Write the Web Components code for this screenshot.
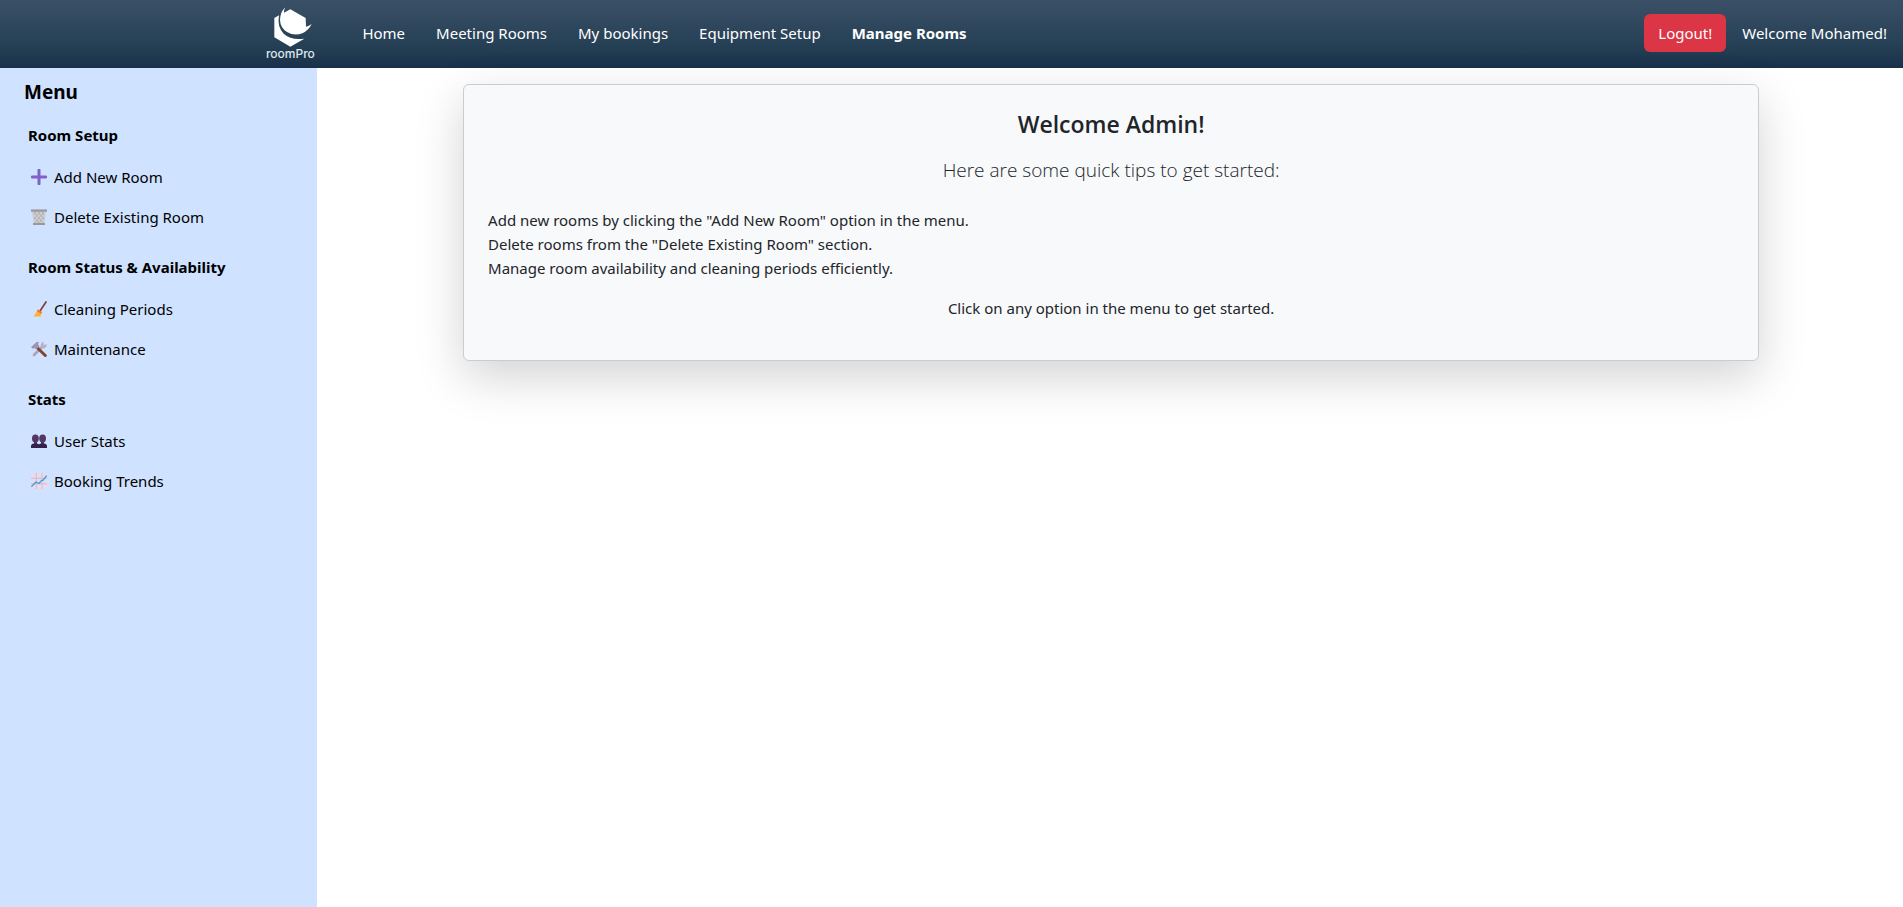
<!DOCTYPE html>
<html lang="en">
<head>
<meta charset="utf-8">
<title>roomPro</title>
<style>
  body { margin: 0; background: #fff; color: #212529; font: 400 15px/24px "Noto Sans", "Open Sans", sans-serif; }
</style>
</head>
<body>
<room-app></room-app>

<template id="t-app">
  <style>
    :host { display: flex; flex-direction: column; min-height: 100vh; }
    .body { display: flex; flex: 1; }
    side-menu { flex: 0 0 16.6667%; }
    main { flex: 1; padding: 16px 12px 16px 14px; }
  </style>
  <top-bar></top-bar>
  <div class="body">
    <side-menu>
      <menu-section heading="Room Setup">
        <menu-item icon="plus">Add New Room</menu-item>
        <menu-item icon="bin">Delete Existing Room</menu-item>
      </menu-section>
      <menu-section heading="Room Status &amp; Availability">
        <menu-item icon="broom">Cleaning Periods</menu-item>
        <menu-item icon="tools">Maintenance</menu-item>
      </menu-section>
      <menu-section heading="Stats">
        <menu-item icon="users">User Stats</menu-item>
        <menu-item icon="chart">Booking Trends</menu-item>
      </menu-section>
    </side-menu>
    <main><welcome-card></welcome-card></main>
  </div>
</template>

<template id="t-bar">
  <style>
    :host { display: block; background: linear-gradient(#3b5066, #243f54 70%, #18304a); color: #fff; }
    header { display: flex; align-items: center; height: 68px; padding: 0 16px 2px 14%; box-sizing: border-box; }
    nav { display: flex; gap: 31px; margin-left: 48px; flex: 1; white-space: nowrap; }
    a { color: inherit; text-decoration: none; }
    nav a[aria-current] { font-weight: 700; }
    button { height: 38px; padding: 0 14px; border: 0; border-radius: 6px; background: #dc3545; color: #fff; font: inherit; margin-right: 16px; }
    span { white-space: nowrap; }
  </style>
  <header>
    <room-logo></room-logo>
    <nav>
      <a href="#home">Home</a>
      <a href="#rooms">Meeting Rooms</a>
      <a href="#bookings">My bookings</a>
      <a href="#equipment">Equipment Setup</a>
      <a href="#manage" aria-current="page">Manage Rooms</a>
    </nav>
    <button type="button">Logout!</button>
    <span>Welcome Mohamed!</span>
  </header>
</template>

<template id="t-logo">
  <style>
    :host { display: block; padding-top: 2px; }
    a { display: flex; flex-direction: column; align-items: center; width: 48px; color: #dfe6ec; text-decoration: none; font: 500 12px/14px Inter, sans-serif; }
    svg { display: block; width: 40px; height: 40px; margin-left: 5px; }
  </style>
  <a href="#home">
    <svg viewBox="70 18 120 120" fill="#fff" aria-hidden="true">
      <path d="M107 19 Q102 27 103 35 L122 25 168 51 169 77 Q178 75 186 69 Q177 88 158 97 Q134 106 112 93 Q92 80 91 56 Q92 33 107 19Z"/>
      <path d="M88 43 L74 51 V109 L122 137 164 113 Q125 119 102 98 Q82 78 88 43Z"/>
    </svg>
    roomPro
  </a>
</template>

<template id="t-side">
  <style>
    :host { display: block; box-sizing: border-box; padding: 12px 24px; background: #cfe2ff; color: #000; }
    h2 { margin: 0 0 19px; font-size: 19px; line-height: 24px; font-weight: 700; }
  </style>
  <h2>Menu</h2>
  <slot></slot>
</template>

<template id="t-section">
  <style>
    :host { display: block; padding: 0 4px 18px; }
    h3 { margin: 0 0 10px; font-size: 15px; line-height: 24px; font-weight: 700; white-space: nowrap; }
  </style>
  <h3></h3>
  <slot></slot>
</template>

<template id="t-item">
  <style>
    :host { display: block; }
    a { display: flex; align-items: center; gap: 7px; padding: 8px 3px; color: inherit; text-decoration: none; white-space: nowrap; }
    svg { width: 16px; height: 16px; flex: none; }
  </style>
  <a href="#"><svg viewBox="0 0 16 16" aria-hidden="true"></svg><span><slot></slot></span></a>
</template>

<template id="t-card">
  <style>
    :host { display: block; max-width: 1296px; margin: 0 auto; box-sizing: border-box; padding: 24px; border: 1px solid #cbccce; border-radius: 6px; background: #f8f9fb; box-shadow: 0 16px 48px rgba(0,0,0,.175); text-align: center; }
    h1, .lead { font-family: "Open Sans", sans-serif; }
    h1 { margin: 0 0 16px; font-size: 23px; line-height: 30px; font-weight: 600; }
    p { margin: 0 0 16px; }
    .lead { margin-bottom: 23px; font-size: 19px; line-height: 30px; font-weight: 300; }
    ul { margin: 0 0 16px; padding: 0; list-style: none; text-align: left; }
  </style>
  <h1>Welcome Admin!</h1>
  <p class="lead">Here are some quick tips to get started:</p>
  <ul>
    <li>Add new rooms by clicking the "Add New Room" option in the menu.</li>
    <li>Delete rooms from the "Delete Existing Room" section.</li>
    <li>Manage room availability and cleaning periods efficiently.</li>
  </ul>
  <p>Click on any option in the menu to get started.</p>
</template>

<script>
  const ICONS = {
    plus: '<path d="M8 1.2V14.8M1.2 8H14.8" stroke="#7f61c9" stroke-width="3" stroke-linecap="round"/>',
    bin: '<path d="M1 2H15L13.5 15H2.5Z" fill="#cfcfd2"/><path d="M3 3l9 11M7 3l6 7M11 3l2 3M3 8l5 6M13 3L4 14M9 3L3 10M5 3L2.5 6M13 8l-5 6" stroke="#a9a9ae" stroke-width=".7" fill="none"/><path d="M0 .4H16V2.8H0Z" fill="#9b9b9f"/><path d="M2 14H14V16H2Z" fill="#99999d"/>',
    broom: '<path d="M15 1L9 10" stroke="#7d4533" stroke-width="1.7" stroke-linecap="round"/><path d="M6.5 9L10.5 11.6 9.5 15.5H2.2Q5 13 6.5 9Z" fill="#ffb02e"/><path d="M7 8.2L11.2 11 10.3 12.8 5.8 10.3Z" fill="#f9763a"/>',
    tools: '<path d="M3 14L11.5 5.5" stroke="#aba1b8" stroke-width="2.5" stroke-linecap="round"/><path d="M10 6.2Q8.6 2.6 12.8 .6L12.4 3.3 14 4 15.7 2.7Q16 7.3 11.7 7.5Z" fill="#b9b0c6"/><path d="M5.5 6L14.3 14.5" stroke="#7d4533" stroke-width="3" stroke-linecap="round"/><path d="M0 6.2L5 1.4Q7 .4 8 1.2L7 3 8.5 5.4 5 8.4 3.8 7 1.8 7.8Z" fill="#9e93ad"/>',
    users: '<g fill="#533566"><ellipse cx="4.4" cy="5.6" rx="3.4" ry="4"/><ellipse cx="11.6" cy="5.6" rx="3.4" ry="4"/><path d="M3 8H6V12H3ZM10 8H13V12H10Z"/></g><path d="M0 15V13Q.2 10.4 3 10.4H5.5Q7.4 10.4 8 11.6Q8.6 10.4 10.5 10.4H13Q15.8 10.4 16 13V15Z" fill="#35204a"/>',
    chart: '<rect width="16" height="16" rx="2" fill="#e8dcec"/><path d="M5.3 0V16M11 0V16M0 5.3H16M0 10.8H16" stroke="#cbb9d2" stroke-width=".9"/><path d="M.8 13.2L5 9 8 10.5 10.6 7.4 12 7.4 15.3 3" fill="none" stroke="#3e9fde" stroke-width="1.3" stroke-linecap="round" stroke-linejoin="round"/>'
  };

  // Base element: clones its template into an open shadow root.
  class Templated extends HTMLElement {
    constructor() {
      super();
      this.attachShadow({ mode: "open" })
        .append(document.getElementById(this.constructor.template).content.cloneNode(true));
    }
  }

  customElements.define("room-logo", class extends Templated { static template = "t-logo"; });
  customElements.define("top-bar", class extends Templated { static template = "t-bar"; });
  customElements.define("side-menu", class extends Templated { static template = "t-side"; });
  customElements.define("menu-section", class extends Templated {
    static template = "t-section";
    connectedCallback() { this.shadowRoot.querySelector("h3").textContent = this.getAttribute("heading"); }
  });
  customElements.define("menu-item", class extends Templated {
    static template = "t-item";
    connectedCallback() { this.shadowRoot.querySelector("svg").innerHTML = ICONS[this.getAttribute("icon")]; }
  });
  customElements.define("welcome-card", class extends Templated { static template = "t-card"; });
  customElements.define("room-app", class extends Templated { static template = "t-app"; });
</script>
</body>
</html>
